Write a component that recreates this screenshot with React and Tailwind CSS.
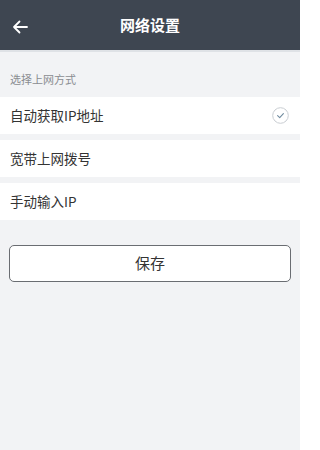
const font = { fontFamily: '"Noto Sans CJK SC", "Noto Sans", sans-serif' };

function Row({ label, checked }) {
  return (
    <div className="flex h-[37px] items-center justify-between bg-white pl-[10px] pr-[11px]">
      <span className="text-[13.5px] text-[#333]">{label}</span>
      {checked && (
        <svg width="17" height="17" viewBox="0 0 17 17">
          <circle cx="8.5" cy="8.5" r="7.8" fill="none" stroke="#c9cdd2" strokeWidth="1" />
          <path d="M5.6 8.7 L7.7 10.6 L11.4 6.6" fill="none" stroke="#6f8a9e" strokeWidth="1.1" strokeLinecap="round" strokeLinejoin="round" />
        </svg>
      )}
    </div>
  );
}

export default function App() {
  return (
    <div className="flex h-[450px] w-[300px] flex-col bg-[#f2f3f5]" style={font}>
      <div className="relative flex h-[50px] items-center justify-center bg-[#3e4651]">
        <svg className="absolute left-[12px] top-[19px]" width="16" height="16" viewBox="0 0 16 16">
          <path d="M15 8 H2 M7.5 2.5 L2 8 L7.5 13.5" fill="none" stroke="#fff" strokeWidth="1.8" strokeLinecap="round" strokeLinejoin="round" />
        </svg>
        <span className="text-[15px] font-bold text-white">网络设置</span>
      </div>
      <div className="h-[2px] bg-[#dfe2e6]" />
      <div className="px-[10px] pt-[19px] pb-[10px] text-[11px] leading-[16px] text-[#8a8d91]">选择上网方式</div>
      <div className="flex flex-col gap-[6px]">
        <Row label="自动获取IP地址" checked />
        <Row label="宽带上网拨号" />
        <Row label="手动输入IP" />
      </div>
      <div className="px-[9px] pt-[25px]">
        <button className="flex h-[37px] w-full items-center justify-center rounded-[5px] border border-[#6a6d72] bg-white text-[15px] text-[#333]">
          保存
        </button>
      </div>
    </div>
  );
}
